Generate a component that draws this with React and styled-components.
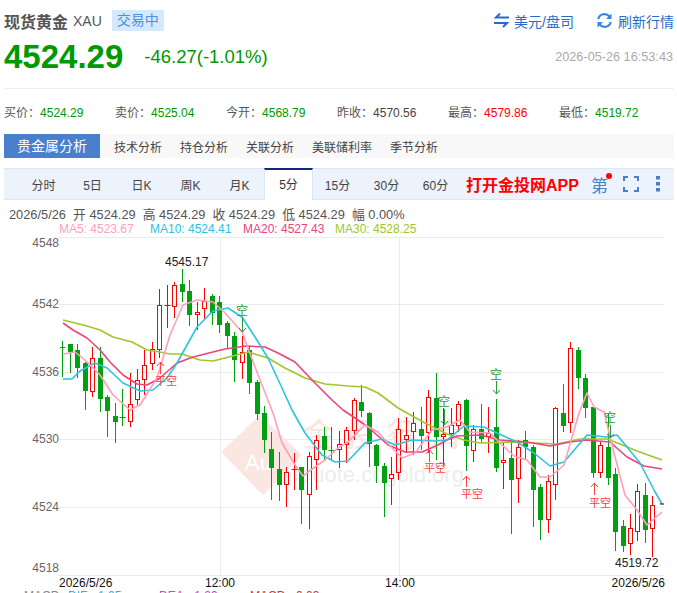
import React from 'react';
import styled, { createGlobalStyle } from 'styled-components';

const GlobalStyle = createGlobalStyle`
    html, body {
        margin: 0;
        padding: 0;
        background: #fff;
        overflow: hidden;
    }
    body {
        font-family: "Liberation Sans", "Noto Sans CJK SC", sans-serif;
    }
`;

const Page = styled.div`
    width: 677px;
    height: 593px;
    overflow: hidden;
    display: flex;
    flex-direction: column;

    & > * {
        flex: none;
    }
`;

// Title row
const TitleRow = styled.header`
    height: 21px;
    margin-top: 10px;
    padding: 0 3px 0 4px;
    display: flex;
    align-items: center;
`;

const Name = styled.h1`
    margin: 0;
    font-size: 16px;
    font-weight: bold;
    color: #555;
`;

const Code = styled.span`
    margin-left: 5px;
    font-size: 14px;
    color: #555;
`;

const Badge = styled.span`
    margin-left: 10px;
    height: 21px;
    line-height: 21px;
    padding: 0 5px;
    font-size: 14px;
    color: #4a90e2;
    background: #d5e9fd;
`;

const Action = styled.a`
    display: flex;
    align-items: center;
    gap: ${(p) => p.$gap}px;
    margin-left: ${(p) => p.$left};
    font-size: 14px;
    color: #2a6bc9;
`;

// Price row
const PriceRow = styled.div`
    height: 46px;
    margin-top: 3px;
    padding: 0 4px;
    display: flex;
    align-items: center;
    color: #009900;
`;

const Price = styled.strong`
    font-size: 33px;
    font-weight: bold;
`;

const Change = styled.span`
    margin-left: 21px;
    font-size: 18.5px;
`;

const Stamp = styled.time`
    margin-left: auto;
    font-size: 12.7px;
    color: #aaa;
`;

const Divider = styled.hr`
    height: 1px;
    margin: 8px 3px 0 4px;
    border: 0;
    background: #eee;
`;

const StatGrid = styled.div`
    display: grid;
    grid-template-columns: repeat(6, 111px);
    height: 45px;
    padding-left: 4px;
    align-items: center;
    font-size: 12px;
    color: #555;
`;

const StatValue = styled.span`
    color: ${(p) => p.$color};
`;

// Analysis tabs
const AnalysisTabs = styled.nav`
    height: 24px;
    margin: 0 3px 0 4px;
    display: flex;
    align-items: center;
    gap: 18px;
    font-size: 12px;
    color: #444;
    background: #f8f8f8;
`;

const AnalysisActive = styled.span`
    width: 96px;
    height: 24px;
    line-height: 24px;
    margin-right: -4px;
    text-align: center;
    font-size: 14px;
    color: #fff;
    background: #4a7fcb;
`;

// Period bar
const PeriodBar = styled.div`
    position: relative;
    box-sizing: border-box;
    height: 32px;
    margin: 10px 3px 0 4px;
    padding-left: 15px;
    display: flex;
    align-items: center;
    border-top: 1px solid #dbe6f6;
    border-bottom: 1px solid #dbe6f6;
    background: #ecf3fd;
`;

const Period = styled.span`
    box-sizing: border-box;
    width: 49px;
    text-align: center;
    font-size: 12px;
    color: #444;
    ${(p) =>
        p.$active &&
        `
        height: 32px;
        margin-top: -1px;
        line-height: 30px;
        color: #333;
        background: #fff;
        border-top: 2px solid #12287e;
        border-left: 1px solid #dbe6f6;
        border-right: 1px solid #dbe6f6;
    `}
`;

const AppLink = styled.a`
    margin-left: 6px;
    font-size: 16px;
    font-weight: bold;
    color: #ff0000;
    white-space: nowrap;
`;

const BookGlyph = styled.span`
    position: relative;
    margin-left: 12px;
    font-size: 17px;
    color: #4a7fc4;
    &::after {
        content: '';
        position: absolute;
        right: -4px;
        top: 1px;
        width: 6px;
        height: 6px;
        border-radius: 50%;
        background: #f00;
    }
`;

const BarIcon = styled.svg`
    display: block;
    margin-left: ${(p) => p.$left}px;
    fill: none;
`;

// Quote line above the chart
const InfoRow = styled.div`
    height: 17px;
    margin-top: 6px;
    padding-left: 9px;
    font-size: 12.8px;
    line-height: 17px;
    color: #555;
    white-space: pre;
`;

const Legend = styled.div`
    display: grid;
    grid-template-columns: 91px 93px 92px auto;
    height: 13px;
    padding-left: 59px;
    font-size: 12px;
    line-height: 13px;
`;

const LegendItem = styled.span`
    color: ${(p) => p.$color};
`;

const ChartSvg = styled.svg`
    display: block;
`;

const MacdRow = styled.div`
    display: grid;
    grid-template-columns: 44px 91px 91px auto;
    padding-left: 24px;
    height: 12px;
    font-size: 12px;
    line-height: 12px;
    white-space: nowrap;
`;

const GREEN = '#00a010';
const RED = '#ff0000';
const MA5 = '#ff9fbb';
const MA10 = '#2cc3e0';
const MA20 = '#ee427e';
const MA30 = '#a0c62c';

// hi, body top, body bottom, lo, colour
const candles = [
    [341, 347, 348, 377, 'g'], [344, 344, 352, 373, 'g'], [344, 350, 368, 378, 'g'], [362, 363, 391, 410, 'g'],
    [347, 358, 391, 397, 'r'], [347, 358, 399, 412, 'g'], [395, 397, 411, 437, 'g'], [403, 416, 422, 443, 'g'],
    [389, 417, 417, 426, 'g'], [373, 404, 421, 427, 'r'], [369, 380, 399, 405, 'r'], [350, 365, 379, 395, 'r'],
    [342, 349, 363, 370, 'r'], [289, 305, 349, 358, 'r'], [285, 305, 305, 328, 'r'], [282, 285, 306, 318, 'r'],
    [269, 284, 292, 302, 'g'], [280, 291, 315, 326, 'g'], [302, 312, 314, 330, 'r'], [288, 301, 308, 320, 'r'],
    [294, 296, 313, 325, 'g'], [296, 302, 325, 333, 'g'], [321, 323, 336, 348, 'g'], [332, 336, 360, 382, 'g'],
    [336, 352, 362, 379, 'r'], [347, 350, 383, 394, 'g'], [380, 382, 414, 420, 'g'], [406, 413, 440, 453, 'g'],
    [432, 449, 468, 500, 'g'], [452, 469, 485, 501, 'g'], [467, 472, 484, 507, 'r'], [453, 469, 469, 490, 'r'],
    [467, 467, 490, 524, 'g'], [452, 456, 494, 529, 'r'], [435, 440, 459, 490, 'r'], [427, 436, 450, 460, 'g'],
    [427, 450, 450, 460, 'g'], [431, 444, 449, 468, 'r'], [427, 430, 444, 463, 'r'], [398, 400, 430, 440, 'r'],
    [385, 402, 411, 417, 'g'], [412, 413, 444, 467, 'g'], [444, 445, 466, 483, 'g'], [463, 466, 483, 517, 'g'],
    [457, 474, 478, 505, 'r'], [418, 429, 472, 480, 'r'], [417, 435, 439, 453, 'r'], [412, 423, 431, 455, 'r'],
    [407, 429, 436, 450, 'g'], [390, 397, 432, 453, 'r'], [373, 398, 437, 460, 'g'], [408, 434, 436, 465, 'r'],
    [408, 425, 433, 447, 'r'], [401, 404, 425, 432, 'r'], [399, 400, 446, 471, 'g'], [425, 429, 450, 462, 'r'],
    [404, 429, 439, 443, 'g'], [407, 433, 436, 453, 'r'], [399, 427, 468, 472, 'g'], [442, 460, 462, 489, 'r'],
    [440, 458, 480, 534, 'g'], [440, 447, 478, 503, 'r'], [431, 440, 447, 460, 'g'], [445, 447, 490, 527, 'g'],
    [484, 487, 520, 540, 'g'], [475, 481, 519, 533, 'r'], [407, 408, 484, 500, 'r'], [384, 413, 426, 432, 'g'],
    [342, 348, 422, 433, 'r'], [347, 350, 378, 389, 'g'], [374, 378, 408, 418, 'g'], [405, 407, 473, 478, 'g'],
    [442, 445, 472, 478, 'r'], [413, 447, 478, 485, 'g'], [468, 474, 532, 551, 'g'], [520, 526, 546, 552, 'g'],
    [514, 528, 543, 555, 'r'], [484, 491, 531, 541, 'r'], [483, 495, 530, 543, 'g'], [496, 505, 528, 557, 'r'],
];

const lines = [
    {
        color: MA30,
        points: '63,320 87,326 100,330 113,337 132,342 147,350 160,352 170,354 182,354 200,360 213,361 225,358 248,352 268,358 285,368 305,378 325,384 348,386 365,387 378,393 398,408 425,423 447,434 464,440 480,443 514,442 557,444 580,439 607,439 620,444 637,451 662,460',
    },
    {
        color: MA20,
        points: '63,323 73,330 87,338 100,350 110,362 123,375 137,384 147,385 160,378 177,363 193,357 213,352 225,349 245,346 265,347 278,353 295,362 312,380 332,400 343,410 355,418 368,427 388,445 405,452 422,452 438,445 447,440 457,436 480,435 500,440 527,442 550,446 570,442 587,440 610,442 627,457 644,466 662,469',
    },
    {
        color: MA10,
        points: '63,379 72,379 80,371 95,363 107,368 123,383 140,391 153,390 167,378 177,363 197,327 213,311 228,308 242,317 255,337 268,358 282,388 292,410 305,433 322,455 335,462 348,461 365,443 382,439 395,445 412,440 435,441 447,440 464,426 484,427 497,433 517,442 534,453 550,466 564,462 587,435 607,437 617,435 627,447 640,463 654,490 662,504',
    },
    {
        color: MA5,
        points: '63,354 75,352 85,360 100,375 113,395 130,410 140,405 157,378 170,335 183,305 197,300 213,302 225,313 242,332 255,367 273,413 282,443 295,465 303,476 315,467 325,460 338,448 348,442 365,425 378,432 392,448 402,458 415,453 432,430 447,427 460,420 470,432 490,433 500,443 514,456 527,460 540,477 550,477 564,465 579,413 587,393 594,407 604,412 614,453 625,495 637,510 647,525 662,512',
    },
];

const rows = [
    { label: '4548', y: 247, line: 237.5 },
    { label: '4542', y: 308, line: 304.5 },
    { label: '4536', y: 376, line: 372.5 },
    { label: '4530', y: 443, line: 439.5 },
    { label: '4524', y: 511, line: 507.5 },
    { label: '4518', y: 572, line: 575.5 },
];

const shortMarks = [
    { x: 242, text: 310, from: 317, to: 332 },
    { x: 444, text: 401, from: 409, to: 425 },
    { x: 496, text: 374, from: 381, to: 394 },
    { x: 610, text: 417, from: 425, to: 438 },
];

const closeMarks = [
    { x: 160, text: 380, from: 362, to: 374 },
    { x: 429, text: 467, from: 450, to: 462 },
    { x: 466, text: 493, from: 476, to: 487 },
    { x: 594, text: 502, from: 483, to: 495 },
];

const Candle = ({ index, data }) => {
    const [hi, top, bottom, lo, kind] = data;
    const x = Math.round(62.3 + 7.47 * index) + 0.5;
    const color = kind === 'g' ? GREEN : RED;
    if (top === bottom) {
        return <path d={`M${x} ${hi}V${lo}M${x - 3} ${top + 0.5}H${x + 3}`} stroke={color} />;
    }
    return (
        <g>
            <path d={`M${x} ${hi}V${top}M${x} ${bottom}V${lo}`} stroke={color} />
            {kind === 'g' ? (
                <rect x={x - 2.5} y={top} width="5" height={bottom - top} fill={GREEN} />
            ) : (
                <rect x={x - 2} y={top + 0.5} width="4" height={bottom - top} fill="#fff" stroke={RED} />
            )}
        </g>
    );
};

const Chart = () => (
    <ChartSvg width="677" height="354" viewBox="0 236 677 354">
        {/* watermark */}
        <path d="M223 452L260 417L300 455L263 493Z" fill="#fbe7e2" stroke="#fbe7e2" strokeWidth="3" strokeLinejoin="round" />
        <g fontFamily='"Liberation Sans", "Noto Sans CJK SC", sans-serif'>
            <text x="245" y="470" fontSize="22" fill="#fff">Au</text>
            <text x="303" y="446" fontSize="32" fill="#f9e6e1" letterSpacing="10">金投行情</text>
            <text x="300" y="482" fontSize="22" fill="#ededed">quote.cngold.org</text>
        </g>

        {rows.map((r) => (
            <path key={r.label} d={`M58 ${r.line}H664`} stroke="#ebebeb" />
        ))}
        <path d="M220.5 237V575M399.5 237V575" stroke="#ebebeb" />

        {candles.map((c, i) => (
            <Candle key={i} index={i} data={c} />
        ))}

        {lines.map((l) => (
            <polyline key={l.color} points={l.points} fill="none" stroke={l.color} strokeWidth="1.6" strokeLinejoin="round" />
        ))}
        <path d="M660 504h4" stroke="#111" />

        <g fontFamily='"Liberation Sans", "Noto Sans CJK SC", sans-serif' fontSize="12">
            {rows.map((r) => (
                <text key={r.label} x="59" y={r.y} textAnchor="end" fill="#666">{r.label}</text>
            ))}
            <text x="165" y="266" fill="#222">4545.17</text>
            <text x="615" y="567" fill="#222">4519.72</text>
            <text x="59" y="587" fill="#111">2026/5/26</text>
            <text x="220" y="587" textAnchor="middle" fill="#111">12:00</text>
            <text x="400" y="587" textAnchor="middle" fill="#111">14:00</text>
            <text x="665" y="587" textAnchor="end" fill="#111">2026/5/26</text>

            {shortMarks.map((m) => (
                <g key={m.x}>
                    <text x={m.x} y={m.text + 5} textAnchor="middle" fontSize="12" fill="#2a9a3a">空</text>
                    <path d={`M${m.x + 0.5} ${m.from}V${m.to}M${m.x - 3} ${m.to - 4}L${m.x + 0.5} ${m.to}L${m.x + 4} ${m.to - 4}`} fill="none" stroke="#2a9a3a" />
                </g>
            ))}
            {closeMarks.map((m) => (
                <g key={m.x}>
                    <text x={m.x - 5} y={m.text + 5} fontSize="11" fill="#ff4040">平空</text>
                    <path d={`M${m.x + 0.5} ${m.to}V${m.from}M${m.x - 3} ${m.from + 4}L${m.x + 0.5} ${m.from}L${m.x + 4} ${m.from + 4}`} fill="none" stroke="#ff4040" />
                </g>
            ))}
        </g>
    </ChartSvg>
);

const stats = [
    ['买价', '4524.29', '#009900'],
    ['卖价', '4525.04', '#009900'],
    ['今开', '4568.79', '#009900'],
    ['昨收', '4570.56', '#444'],
    ['最高', '4579.86', '#ff0000'],
    ['最低', '4519.72', '#009900'],
];

const analysis = ['技术分析', '持仓分析', '关联分析', '美联储利率', '季节分析'];
const periods = ['分时', '5日', '日K', '周K', '月K', '5分', '15分', '30分', '60分'];

export default function App() {
    return (
        <Page>
            <GlobalStyle />
            <TitleRow>
                <Name>现货黄金</Name>
                <Code>XAU</Code>
                <Badge>交易中</Badge>
                <Action $gap={5} $left="auto">
                    <svg width="15" height="15" viewBox="0 0 15 15" fill="none" stroke="#2a6bc9" strokeWidth="2">
                        <path d="M15 4.5H2L6 0.5M0 10H13L9 14" />
                    </svg>
                    美元/盘司
                </Action>
                <Action $gap={5} $left="22px">
                    <svg width="17" height="17" viewBox="0 0 17 17" fill="none" stroke="#3a86e0" strokeWidth="2.2">
                        <path d="M2.2 7A6.4 6.4 0 0 1 13.5 4.6M14.8 10A6.4 6.4 0 0 1 3.5 12.4" />
                        <path d="M15.5 1.5V7H10ZM1.5 15.5V10H7Z" fill="#3a86e0" stroke="none" />
                    </svg>
                    刷新行情
                </Action>
            </TitleRow>

            <PriceRow>
                <Price>4524.29</Price>
                <Change>-46.27(-1.01%)</Change>
                <Stamp>2026-05-26 16:53:43</Stamp>
            </PriceRow>
            <Divider />

            <StatGrid>
                {stats.map(([label, value, color]) => (
                    <span key={label}>
                        {label}：<StatValue $color={color}>{value}</StatValue>
                    </span>
                ))}
            </StatGrid>

            <AnalysisTabs>
                <AnalysisActive>贵金属分析</AnalysisActive>
                {analysis.map((a) => (
                    <span key={a}>{a}</span>
                ))}
            </AnalysisTabs>

            <PeriodBar>
                {periods.map((p) => (
                    <Period key={p} $active={p === '5分'}>{p}</Period>
                ))}
                <AppLink>打开金投网APP</AppLink>
                <BookGlyph>第</BookGlyph>
                <BarIcon $left={15} width="16" height="16" viewBox="0 0 16 16" stroke="#4a7fc4" strokeWidth="2">
                    <path d="M1 5V1H5M11 1H15V5M15 11V15H11M5 15H1V11" />
                </BarIcon>
                <BarIcon $left={17} width="4" height="16" viewBox="0 0 4 16">
                    <path d="M0 0h4v3.500H0zM0 6h4v3.500H0zM0 12h4v3.500H0z" fill="#4a7fc4" />
                </BarIcon>
            </PeriodBar>

            <InfoRow>2026/5/26  开 4524.29  高 4524.29  收 4524.29  低 4524.29  幅 0.00%</InfoRow>
            <Legend>
                <LegendItem $color={MA5}>MA5: 4523.67</LegendItem>
                <LegendItem $color={MA10}>MA10: 4524.41</LegendItem>
                <LegendItem $color={MA20}>MA20: 4527.43</LegendItem>
                <LegendItem $color={MA30}>MA30: 4528.25</LegendItem>
            </Legend>

            <Chart />

            <MacdRow>
                <LegendItem $color="#888">MACD</LegendItem>
                <LegendItem $color="#1fb8ee">DIF: -1.95</LegendItem>
                <LegendItem $color="#e03cc8">DEA: -1.29</LegendItem>
                <LegendItem $color="#e03030">MACD: -0.03</LegendItem>
            </MacdRow>
        </Page>
    );
}
